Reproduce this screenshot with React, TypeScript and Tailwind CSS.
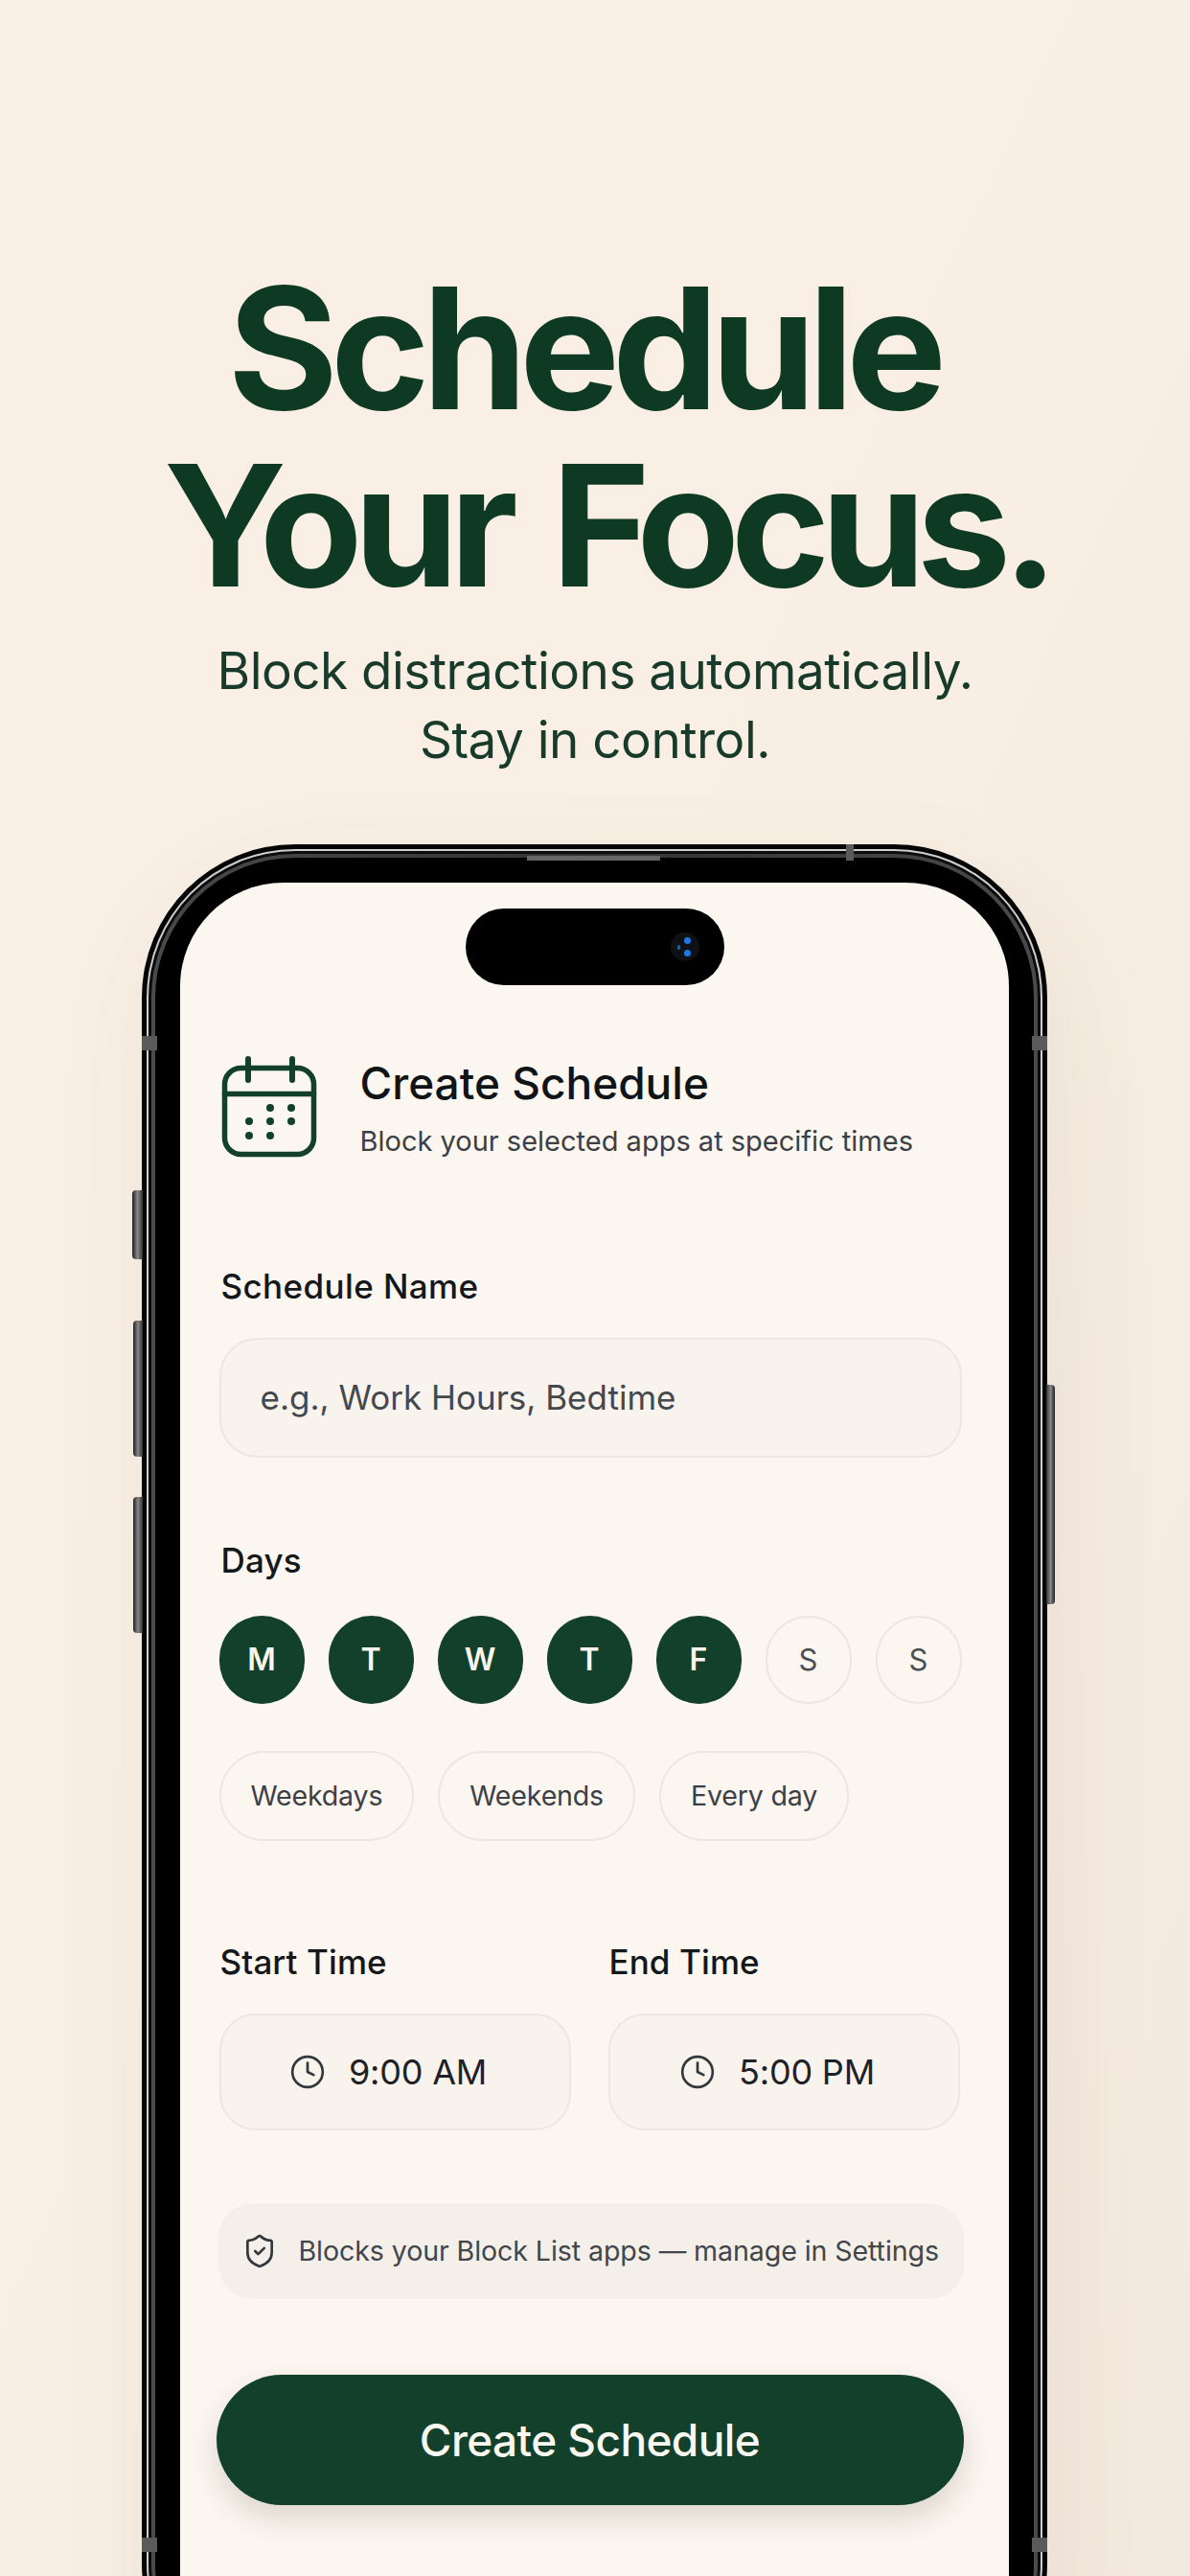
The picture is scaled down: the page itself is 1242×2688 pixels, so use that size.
import { Clock, ShieldCheck } from 'lucide-react';

const days = [
  { label: 'M', on: true },
  { label: 'T', on: true },
  { label: 'W', on: true },
  { label: 'T', on: true },
  { label: 'F', on: true },
  { label: 'S', on: false },
  { label: 'S', on: false },
];

const presets = ['Weekdays', 'Weekends', 'Every day'];

function CalendarIcon() {
  return (
    <svg width="100" height="106" viewBox="0 0 100 106" fill="none" stroke="#12402a" strokeWidth="5.5" strokeLinecap="round" className="shrink-0">
      <rect x="3.5" y="12.5" width="93" height="90" rx="17" />
      <path d="M3.5 39.5h93" />
      <path d="M28 3v22M74 3v22" strokeWidth="6" />
      <g fill="#12402a" stroke="none">
        <circle cx="51" cy="54" r="4" />
        <circle cx="73" cy="54" r="4" />
        <circle cx="29" cy="68" r="4" />
        <circle cx="51" cy="68" r="4" />
        <circle cx="73" cy="68" r="4" />
        <circle cx="29" cy="83" r="4" />
        <circle cx="51" cy="83" r="4" />
      </g>
    </svg>
  );
}

function TimeField({ label, value }: { label: string; value: string }) {
  return (
    <div className="w-[367px] flex flex-col gap-[32px]">
      <p className="text-[35px] leading-[44px] font-medium text-[#15181b] tracking-[0.1px] pl-[1px]">{label}</p>
      <div className="h-[122px] rounded-[38px] border-2 border-[#ebe7e1] bg-[#f8f3ed] flex items-center justify-center gap-[24px] pr-[14px]">
        <Clock size={38} strokeWidth={1.7} className="text-[#33383d]" />
        <span className="text-[36px] text-[#1e2226] tracking-[-0.2px]">{value}</span>
      </div>
    </div>
  );
}

export default function App() {
  return (
    <div className="w-[1242px] h-[2688px] overflow-hidden bg-gradient-to-br from-[#f9efe5] via-[#f8eee3] to-[#f4e9de] flex flex-col items-center [font-family:Inter,sans-serif]">
      <h1 className="pt-[270px] flex flex-col items-center text-[176px] leading-[185px] font-bold text-[#0e3a24] whitespace-nowrap">
        <span className="pr-[24px] tracking-[-8px]">Schedule</span>
        <span className="pl-[24px] tracking-[-9.5px] [word-spacing:12px]">Your Focus.</span>
      </h1>
      <p className="mt-[24px] text-center text-[53px] leading-[72px] text-[#173a2a] tracking-[-0.5px]">
        Block distractions automatically.
        <br />
        Stay in control.
      </p>

      {/* phone */}
      <div className="relative mt-[73px] mr-[2px] w-[945px] shrink-0 rounded-[160px] bg-[#050505] p-[5px] shadow-[16px_40px_110px_rgba(120,90,60,0.08)]">
        {/* side buttons */}
        <div className="absolute left-[-10px] top-[361px] w-[11px] h-[72px] rounded-l-[4px] bg-gradient-to-r from-[#222] via-[#8a8a8a] to-[#333]" />
        <div className="absolute left-[-9px] top-[497px] w-[10px] h-[142px] rounded-l-[4px] bg-gradient-to-r from-[#222] via-[#8a8a8a] to-[#333]" />
        <div className="absolute left-[-9px] top-[681px] w-[10px] h-[142px] rounded-l-[4px] bg-gradient-to-r from-[#222] via-[#8a8a8a] to-[#333]" />
        <div className="absolute right-[-8px] top-[564px] w-[9px] h-[229px] rounded-r-[4px] bg-gradient-to-r from-[#333] via-[#8a8a8a] to-[#222]" />
        {/* antenna bands */}
        <div className="absolute left-[735px] top-0 w-[8px] h-[17px] bg-[#5a5a5a] z-10" />
        <div className="absolute left-[402px] top-[12px] w-[139px] h-[5px] bg-[#666] z-10" />
        <div className="absolute left-0 top-[200px] w-[16px] h-[15px] bg-[#5a5a5a] z-10" />
        <div className="absolute right-0 top-[200px] w-[16px] h-[15px] bg-[#5a5a5a] z-10" />
        <div className="absolute left-0 top-[1767px] w-[16px] h-[15px] bg-[#5a5a5a] z-10" />
        <div className="absolute right-0 top-[1767px] w-[16px] h-[15px] bg-[#5a5a5a] z-10" />

        <div className="rounded-[155px] bg-[#cfcfcf] p-[2px]">
          <div className="rounded-[153px] bg-[#0c0c0c] p-[3px]">
            <div className="rounded-[150px] bg-gradient-to-r from-[#4a4a4a] via-[#333] to-[#4a4a4a] p-[4px]">
              <div className="rounded-[146px] bg-black p-[26px] pb-0">
                {/* screen */}
                <div className="relative h-[1900px] rounded-[108px] bg-[#fbf6ef] px-[41px] pt-[180px] flex flex-col">
                  <div className="absolute left-[298px] top-[27px] w-[270px] h-[80px] rounded-full bg-black flex items-center justify-end pr-[26px]">
                    <div className="relative w-[30px] h-[30px] rounded-full bg-[#0e1216]">
                      <span className="absolute left-[14px] top-[5px] w-[7px] h-[7px] rounded-full bg-[#1e78e6]" />
                      <span className="absolute left-[14px] top-[18px] w-[7px] h-[7px] rounded-full bg-[#1e78e6]" />
                      <span className="absolute left-[7px] top-[13px] w-[3px] h-[5px] rounded-full bg-[#1a5fb4]" />
                    </div>
                  </div>

                  <div className="flex items-center gap-[45px] pl-[2px]">
                    <CalendarIcon />
                    <div className="flex flex-col gap-[16px] pt-[2px]">
                      <h2 className="text-[46px] leading-[54px] font-medium text-[#111416] tracking-[0px]">Create Schedule</h2>
                      <p className="text-[29px] leading-[36px] text-[#3c4046]">Block your selected apps at specific times</p>
                    </div>
                  </div>

                  <div className="mt-[111px] flex flex-col gap-[32px]">
                    <p className="pl-[2px] text-[35px] leading-[44px] font-medium text-[#15181b] tracking-[0.4px]">Schedule Name</p>
                    <div className="w-[775px] h-[125px] rounded-[40px] border-2 border-[#ebe7e1] bg-[#f8f3ed] flex items-center pl-[41px] text-[35px] text-[#44484d]">
                      e.g., Work Hours, Bedtime
                    </div>
                  </div>

                  <div className="mt-[85px] flex flex-col gap-[36px]">
                    <p className="pl-[2px] text-[35px] leading-[44px] font-medium text-[#15181b] tracking-[0.2px]">Days</p>
                    <div className="flex gap-[25px]">
                      {days.map((d, i) =>
                        d.on ? (
                          <div key={i} className="w-[89px] h-[92px] rounded-full bg-[#12402a] flex items-center justify-center text-[32px] font-semibold text-[#f8f5ef]">
                            {d.label}
                          </div>
                        ) : (
                          <div key={i} className="w-[90px] h-[92px] rounded-full border-2 border-[#ebe7e1] flex items-center justify-center text-[31px] text-[#4b4f54]">
                            {d.label}
                          </div>
                        ),
                      )}
                    </div>
                    <div className="mt-[13px] flex gap-[25px]">
                      {presets.map((p) => (
                        <div key={p} className="h-[94px] px-[31px] rounded-full border-2 border-[#ebe7e1] flex items-center text-[28.6px] text-[#3c4046] tracking-[-0.2px]">
                          {p}
                        </div>
                      ))}
                    </div>
                  </div>

                  <div className="mt-[104px] flex gap-[39px]">
                    <TimeField label="Start Time" value="9:00 AM" />
                    <TimeField label="End Time" value="5:00 PM" />
                  </div>

                  <div className="mt-[76px] w-[778px] -ml-[1px] h-[100px] rounded-[36px] bg-[#f5efe9] flex items-center gap-[22px] pl-[24px] text-[28.6px] text-[#42464b] whitespace-nowrap tracking-[-0.1px]">
                    <ShieldCheck size={38} strokeWidth={1.7} className="text-[#33383d] shrink-0" />
                    Blocks your Block List apps — manage in Settings
                  </div>

                  <div className="mt-[79px] -ml-[3px] w-[780px] h-[136px] rounded-full bg-[#12402a] shadow-[0_14px_30px_rgba(60,50,40,0.16)] flex items-center justify-center text-[46px] font-medium text-[#faf7f1] tracking-[-0.6px]">
                    Create Schedule
                  </div>
                </div>
              </div>
            </div>
          </div>
        </div>
      </div>
    </div>
  );
}
